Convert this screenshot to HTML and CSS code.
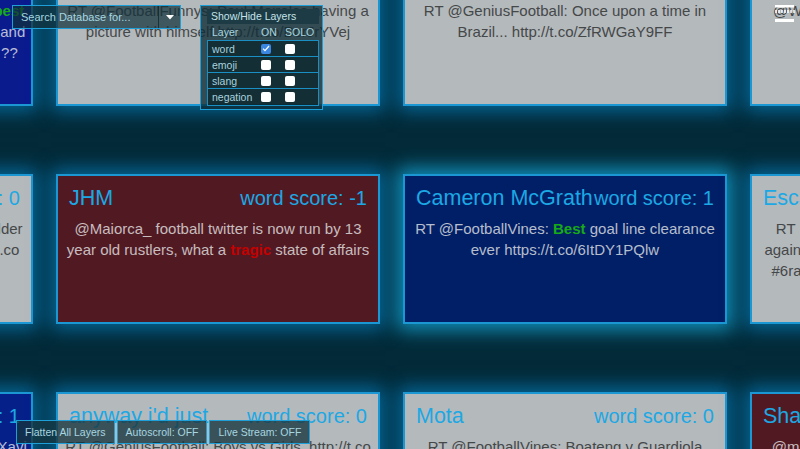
FILE: index.html
```html
<!DOCTYPE html>
<html lang="en">
<head>
<meta charset="utf-8">
<title>Tweet Layers</title>
<link rel="stylesheet" href="styles.css">
</head>
<body>
<main class="wall">
  <article class="card blue">
    <header class="card-head"><span class="name">Ronaldinho10</span><span class="score">word score: 1</span></header>
    <p class="tweet">RT @BleacherReport: Neymar is just the <b class="pos">best</b><br>his skill, his pace, his vision, his technique and<br>Is he better than Messi and Ronaldo now ??</p>
  </article>
  <article class="card gray">
    <header class="card-head"><span class="name">Ahmed</span><span class="score">word score: 0</span></header>
    <p class="tweet">RT @FootballFunnys: Paul Meireles having a picture with himself http://t.co/DcrJrYVej</p>
  </article>
  <article class="card gray">
    <header class="card-head"><span class="name">Dan Wright</span><span class="score">word score: 0</span></header>
    <p class="tweet">RT @GeniusFootball: Once upon a time in Brazil... http://t.co/ZfRWGaY9FF</p>
  </article>
  <article class="card gray">
    <header class="card-head"><span class="name">Liam</span><span class="score">word score: 0</span></header>
    <p class="tweet">@WayneRooney what a goal that was lad</p>
  </article>

  <article class="card gray">
    <header class="card-head"><span class="name">Tom Harris</span><span class="score">word score: 0</span></header>
    <p class="tweet">RT @FootballFunnys: When you realise older<br>than half the Barcelona squad now http://t.co</p>
  </article>
  <article class="card maroon">
    <header class="card-head"><span class="name">JHM</span><span class="score">word score: -1</span></header>
    <p class="tweet">@Maiorca_ football twitter is now run by 13 year old rustlers, what a <b class="neg">tragic</b> state of affairs</p>
  </article>
  <article class="card navy glow">
    <header class="card-head"><span class="name">Cameron McGrath</span><span class="score">word score: 1</span></header>
    <p class="tweet">RT @FootballVines: <b class="pos">Best</b> goal line clearance ever https://t.co/6ItDY1PQlw</p>
  </article>
  <article class="card gray">
    <header class="card-head"><span class="name">Escape2Victory</span><span class="score">word score: 0</span></header>
    <p class="tweet">RT @SkySportsNews: Chelsea have lost<br>again in stoppage time at Selhurst Park, ugh<br>#6radio #CPFC #CFC https://t.co/Lm3Qz7</p>
  </article>

  <article class="card blue2">
    <header class="card-head"><span class="name">Pep Fan</span><span class="score">word score: 1</span></header>
    <p class="tweet">RT @FCBarcelona: Happy birthday to our Xavi</p>
  </article>
  <article class="card gray">
    <header class="card-head"><span class="name">anyway i'd just</span><span class="score">word score: 0</span></header>
    <p class="tweet">RT @GeniusFootball: Boys vs Girls. http://t.co<wbr>/Qw8PzL1xN</p>
  </article>
  <article class="card gray">
    <header class="card-head"><span class="name">Mota</span><span class="score">word score: 0</span></header>
    <p class="tweet">RT @FootballVines: Boateng v Guardiola https://t.co/9aKd02mPqL</p>
  </article>
  <article class="card maroon">
    <header class="card-head"><span class="name">Shane</span><span class="score">word score: 0</span></header>
    <p class="tweet">@mjones_ this is what happens when you<br>let them play</p>
  </article>
</main>

<div class="search">
  <span class="search-text">Search Database for...</span>
  <span class="search-drop"><svg width="8" height="5" viewBox="0 0 8 5"><path d="M0 0H8L4 4.5Z" fill="#ffffff"/></svg></span>
</div>

<section class="layers">
  <div class="layers-title">Show/Hide Layers</div>
  <div class="layers-grid layers-head"><span>Layer</span><span>ON</span><span>SOLO</span></div>
  <div class="layers-table">
    <div class="layers-grid layer-row"><span>word</span><span class="cb on"><svg width="8" height="7" viewBox="0 0 8 7"><path d="M1 3.6L3 5.6L7 1" fill="none" stroke="#fff" stroke-width="1.3"/></svg></span><span class="cb"></span></div>
    <div class="layers-grid layer-row"><span>emoji</span><span class="cb"></span><span class="cb"></span></div>
    <div class="layers-grid layer-row"><span>slang</span><span class="cb"></span><span class="cb"></span></div>
    <div class="layers-grid layer-row"><span>negation</span><span class="cb"></span><span class="cb"></span></div>
  </div>
</section>

<div class="menu-icon">
  <svg width="22" height="24" viewBox="0 0 22 24">
    <rect x="1" y="5" width="19" height="2.5" fill="#ffffff"/>
    <line x1="1" y1="11.5" x2="21" y2="11.5" stroke="#ffffff" stroke-width="3" stroke-dasharray="2 1" opacity="0.75"/>
    <rect x="1" y="19" width="19" height="3" fill="#ffffff"/>
  </svg>
</div>

<nav class="controls">
  <button class="ctl">Flatten All Layers</button>
  <button class="ctl">Autoscroll: OFF</button>
  <button class="ctl">Live Stream: OFF</button>
</nav>
</body>
</html>
```

FILE: styles.css
```css
html, body {
  margin: 0;
  padding: 0;
  width: 800px;
  height: 449px;
  overflow: hidden;
}
body {
  background: #032a38;
  font-family: "Liberation Sans", Arial, sans-serif;
}

.wall {
  display: grid;
  grid-template-columns: repeat(4, 324px);
  grid-auto-rows: 150px;
  gap: 68px 23px;
  margin: -44px 0 0 -291px;
}

.card {
  box-sizing: border-box;
  border: 2px solid #1b98d4;
  padding: 10px 11px;
  box-shadow: 0 0 18px 5px rgba(5, 130, 195, 0.7);
  overflow: hidden;
}
.card.glow {
  box-shadow: 0 0 18px 6px rgba(20, 170, 220, 0.8);
}
.gray { background: #b4b9bc; }
.maroon { background: #511a23; }
.navy { background: #001f66; }
.blue { background: #0a1b8e; }
.blue2 { background: #06208a; }

.card-head {
  display: flex;
  justify-content: space-between;
  align-items: baseline;
  white-space: nowrap;
  line-height: 24px;
  color: #1ca8e4;
}
.name { font-size: 21.5px; }
.score { font-size: 20px; }

.tweet {
  margin: 8px -9px 0;
  font-size: 15px;
  line-height: 21px;
  text-align: center;
  color: rgba(235, 235, 235, 0.78);
}
.gray .tweet { color: #454849; }
.pos { color: #17a917; }
.neg { color: #c40000; }

/* search box */
.search {
  position: absolute;
  left: 12px;
  top: 5px;
  width: 167px;
  height: 22px;
  border: 1px solid #1e9fd8;
  background: rgba(18, 48, 58, 0.72);
  display: flex;
  align-items: center;
}
.search-text {
  flex: 1;
  padding-left: 8px;
  font-size: 11px;
  color: #a6d6e0;
}
.search-drop {
  width: 21px;
  height: 22px;
  border-left: 1px solid rgba(20, 45, 52, 0.9);
  display: flex;
  align-items: center;
  justify-content: center;
}

/* layers panel */
.layers {
  position: absolute;
  left: 200px;
  top: 5px;
  width: 112px;
  padding: 3px 3px 3px 6px;
  border: 1px solid #1e9fd8;
  background: rgba(14, 44, 54, 0.78);
  font-size: 10.5px;
  color: #a8d3de;
}
.layers-title {
  height: 15px;
  line-height: 15px;
  padding-left: 4px;
  background: #1c3b44;
  color: #c6e3eb;
}
.layers-grid {
  display: grid;
  grid-template-columns: 49px 24px 1fr;
  align-items: center;
  padding-left: 4px;
}
.layers-head {
  height: 16px;
  padding-left: 5px;
}
.layers-table {
  border: 1px solid #1a8fc4;
  background: rgba(6, 34, 42, 0.7);
}
.layer-row {
  height: 15px;
  border-bottom: 1px solid #1a8fc4;
}
.layer-row:last-child { border-bottom: none; height: 16px; }
.cb {
  width: 10px;
  height: 10px;
  border-radius: 2px;
  background: #ffffff;
  display: flex;
  align-items: center;
  justify-content: center;
}
.cb.on { background: #3a86e0; }

/* menu icon */
.menu-icon {
  position: absolute;
  left: 774px;
  top: 0;
  width: 22px;
  height: 24px;
}

/* bottom controls */
.controls {
  position: absolute;
  left: 16px;
  top: 420px;
  display: flex;
  gap: 2px;
}
.ctl {
  height: 24px;
  padding: 0 8px;
  border: 1px solid #1e9fd8;
  background: rgba(22, 52, 62, 0.78);
  color: #a8d6e0;
  font-family: "Liberation Sans", Arial, sans-serif;
  font-size: 10.5px;
  line-height: 22px;
}
```
